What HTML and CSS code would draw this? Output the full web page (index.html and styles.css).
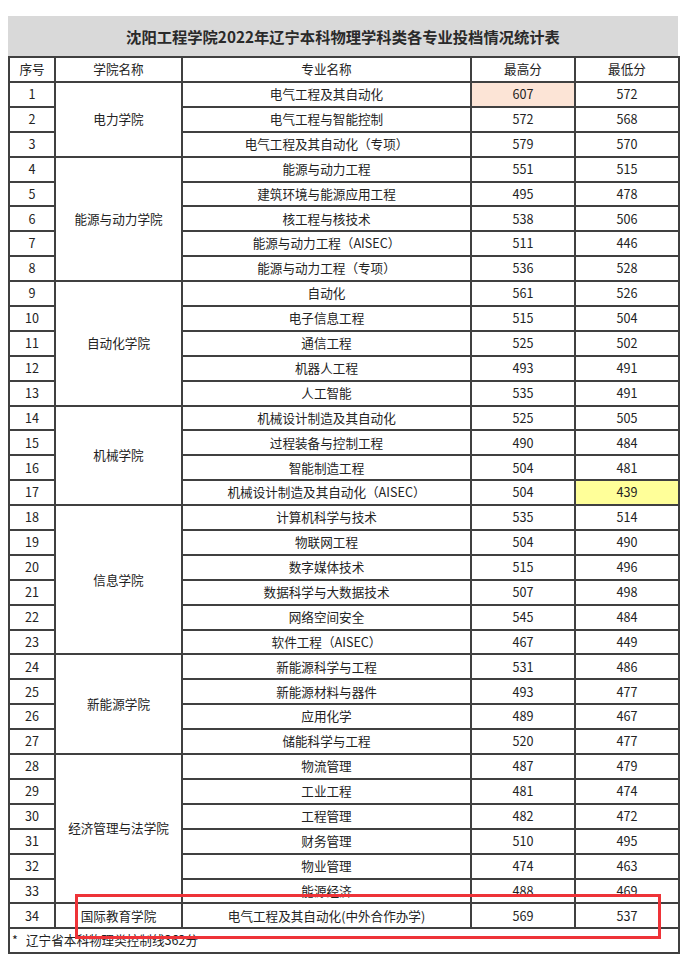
FILE: index.html
```html
<!DOCTYPE html>
<html lang="zh-CN">
<head>
<meta charset="utf-8">
<title>沈阳工程学院2022年辽宁本科物理学科类各专业投档情况统计表</title>
<link rel="stylesheet" href="styles.css">
</head>
<body>
<div class="sheet">
  <div class="title">沈阳工程学院2022年辽宁本科物理学科类各专业投档情况统计表</div>
  <table class="stats">
    <colgroup>
      <col class="c-no"><col class="c-college"><col class="c-major"><col class="c-max"><col class="c-min">
    </colgroup>
    <thead>
      <tr><th>序号</th><th>学院名称</th><th>专业名称</th><th>最高分</th><th>最低分</th></tr>
    </thead>
    <tbody>
      <tr><td>1</td><td rowspan="3">电力学院</td><td>电气工程及其自动化</td><td class="hi-peach">607</td><td>572</td></tr>
      <tr><td>2</td><td>电气工程与智能控制</td><td>572</td><td>568</td></tr>
      <tr><td>3</td><td>电气工程及其自动化（专项）</td><td>579</td><td>570</td></tr>
      <tr><td>4</td><td rowspan="5">能源与动力学院</td><td>能源与动力工程</td><td>551</td><td>515</td></tr>
      <tr><td>5</td><td>建筑环境与能源应用工程</td><td>495</td><td>478</td></tr>
      <tr><td>6</td><td>核工程与核技术</td><td>538</td><td>506</td></tr>
      <tr><td>7</td><td>能源与动力工程（AISEC）</td><td>511</td><td>446</td></tr>
      <tr><td>8</td><td>能源与动力工程（专项）</td><td>536</td><td>528</td></tr>
      <tr><td>9</td><td rowspan="5">自动化学院</td><td>自动化</td><td>561</td><td>526</td></tr>
      <tr><td>10</td><td>电子信息工程</td><td>515</td><td>504</td></tr>
      <tr><td>11</td><td>通信工程</td><td>525</td><td>502</td></tr>
      <tr><td>12</td><td>机器人工程</td><td>493</td><td>491</td></tr>
      <tr><td>13</td><td>人工智能</td><td>535</td><td>491</td></tr>
      <tr><td>14</td><td rowspan="4">机械学院</td><td>机械设计制造及其自动化</td><td>525</td><td>505</td></tr>
      <tr><td>15</td><td>过程装备与控制工程</td><td>490</td><td>484</td></tr>
      <tr><td>16</td><td>智能制造工程</td><td>504</td><td>481</td></tr>
      <tr><td>17</td><td>机械设计制造及其自动化（AISEC）</td><td>504</td><td class="hi-yellow">439</td></tr>
      <tr><td>18</td><td rowspan="6">信息学院</td><td>计算机科学与技术</td><td>535</td><td>514</td></tr>
      <tr><td>19</td><td>物联网工程</td><td>504</td><td>490</td></tr>
      <tr><td>20</td><td>数字媒体技术</td><td>515</td><td>496</td></tr>
      <tr><td>21</td><td>数据科学与大数据技术</td><td>507</td><td>498</td></tr>
      <tr><td>22</td><td>网络空间安全</td><td>545</td><td>484</td></tr>
      <tr><td>23</td><td>软件工程（AISEC）</td><td>467</td><td>449</td></tr>
      <tr><td>24</td><td rowspan="4">新能源学院</td><td>新能源科学与工程</td><td>531</td><td>486</td></tr>
      <tr><td>25</td><td>新能源材料与器件</td><td>493</td><td>477</td></tr>
      <tr><td>26</td><td>应用化学</td><td>489</td><td>467</td></tr>
      <tr><td>27</td><td>储能科学与工程</td><td>520</td><td>477</td></tr>
      <tr><td>28</td><td rowspan="6">经济管理与法学院</td><td>物流管理</td><td>487</td><td>479</td></tr>
      <tr><td>29</td><td>工业工程</td><td>481</td><td>474</td></tr>
      <tr><td>30</td><td>工程管理</td><td>482</td><td>472</td></tr>
      <tr><td>31</td><td>财务管理</td><td>510</td><td>495</td></tr>
      <tr><td>32</td><td>物业管理</td><td>474</td><td>463</td></tr>
      <tr><td>33</td><td>能源经济</td><td>488</td><td>469</td></tr>
      <tr><td>34</td><td>国际教育学院</td><td>电气工程及其自动化(中外合作办学)</td><td>569</td><td>537</td></tr>
      <tr><td class="note" colspan="5"><span class="star">*</span>辽宁省本科物理类控制线362分</td></tr>
    </tbody>
  </table>
  <div class="mark"></div>
</div>
</body>
</html>
```

FILE: styles.css
```css
html, body {
  margin: 0;
  padding: 0;
  background: #ffffff;
}

body {
  padding: 16px 8px 0 8px;
  font-family: "Noto Sans CJK SC", "Noto Sans", sans-serif;
  color: #222222;
}

.sheet {
  position: relative;
  width: 670px;
}

.title {
  height: 40px;
  background: #d9d9d9;
  display: flex;
  align-items: center;
  justify-content: center;
  font-size: 15.3px;
  font-weight: 700;
  color: #2a2a2a;
}

.stats {
  width: 670px;
  border-collapse: collapse;
  table-layout: fixed;
  font-size: 12.6px;
  line-height: 1;
}

.c-no { width: 46px; }
.c-college { width: 127px; }
.c-major { width: 289px; }
.c-max { width: 104px; }
.c-min { width: 104px; }

.stats th,
.stats td {
  border: 2px solid #404040;
  height: 24.9px;
  padding: 0 2px;
  text-align: center;
  vertical-align: middle;
  font-weight: 400;
  box-sizing: border-box;
  white-space: nowrap;
}

.stats th {
  height: 25px;
}

.hi-peach {
  background: #fce4d6;
}

.hi-yellow {
  background: #ffff99;
}

.stats td.note {
  text-align: left;
  padding-left: 2px;
}

.star {
  display: inline-block;
  width: 14px;
}

.mark {
  position: absolute;
  left: 67px;
  top: 878px;
  width: 586px;
  height: 45px;
  border: 3px solid #ee3338;
  box-sizing: border-box;
}
```
